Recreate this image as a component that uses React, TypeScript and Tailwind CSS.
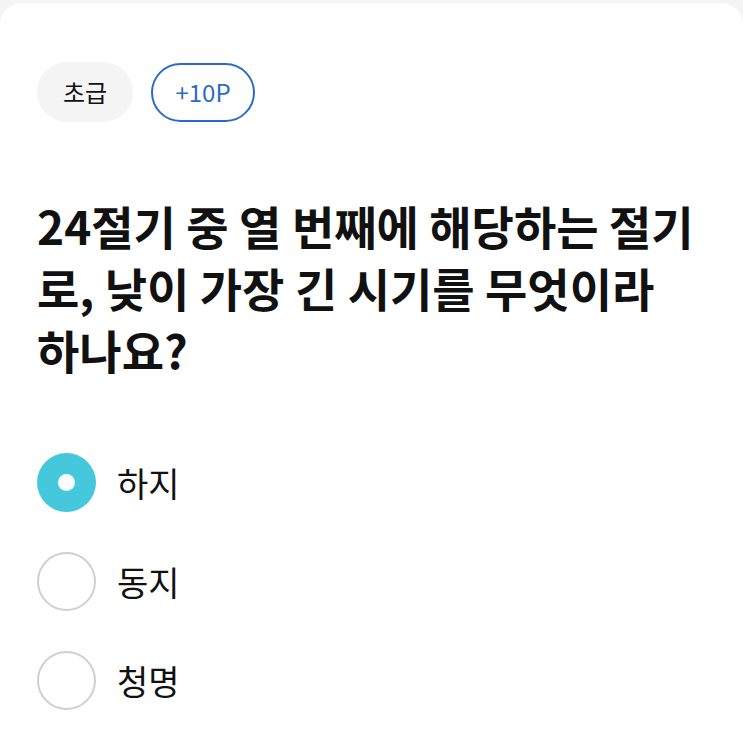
import React, { useState } from 'react';

const options = ['하지', '동지', '청명'];

export default function App() {
  const [picked, setPicked] = useState(0);

  return (
    <div
      className="min-h-[744px] bg-[#f4f4f4] pt-[3px]"
      style={{ fontFamily: '"Noto Sans CJK KR", "Noto Sans", sans-serif' }}
    >
      <div className="min-h-[741px] rounded-t-[22px] bg-white px-[37px] pt-[59px]">
        {/* 난이도 / 포인트 */}
        <div className="flex items-center gap-[18px]">
          <span className="flex h-[60px] w-[96px] items-center justify-center rounded-full bg-[#f4f4f4] text-[24px] text-[#111]">
            초급
          </span>
          <span className="flex h-[59px] w-[104px] items-center justify-center rounded-full border-2 border-[#2a6bc9] text-[24px] text-[#2a6bc9]">
            +10P
          </span>
        </div>

        {/* 문제 */}
        <h1 className="mt-[72px] text-[46px] font-bold leading-[62px] text-[#111]">
          24절기 중 열 번째에 해당하는 절기로, 낮이 가장 긴 시기를 무엇이라 하나요?
        </h1>

        {/* 보기 */}
        <ul className="mt-[73px] flex flex-col gap-[40px]">
          {options.map((label, i) => (
            <li key={label}>
              <button
                onClick={() => setPicked(i)}
                className="flex items-center gap-[21px] text-left"
              >
                {picked === i ? (
                  <span className="flex h-[59px] w-[59px] items-center justify-center rounded-full bg-[#45c8dc]">
                    <span className="h-[17px] w-[17px] rounded-full bg-white" />
                  </span>
                ) : (
                  <span className="h-[59px] w-[59px] rounded-full border-2 border-[#cfcfcf] bg-white" />
                )}
                <span className="text-[34px] text-[#111]">{label}</span>
              </button>
            </li>
          ))}
        </ul>
      </div>
    </div>
  );
}
